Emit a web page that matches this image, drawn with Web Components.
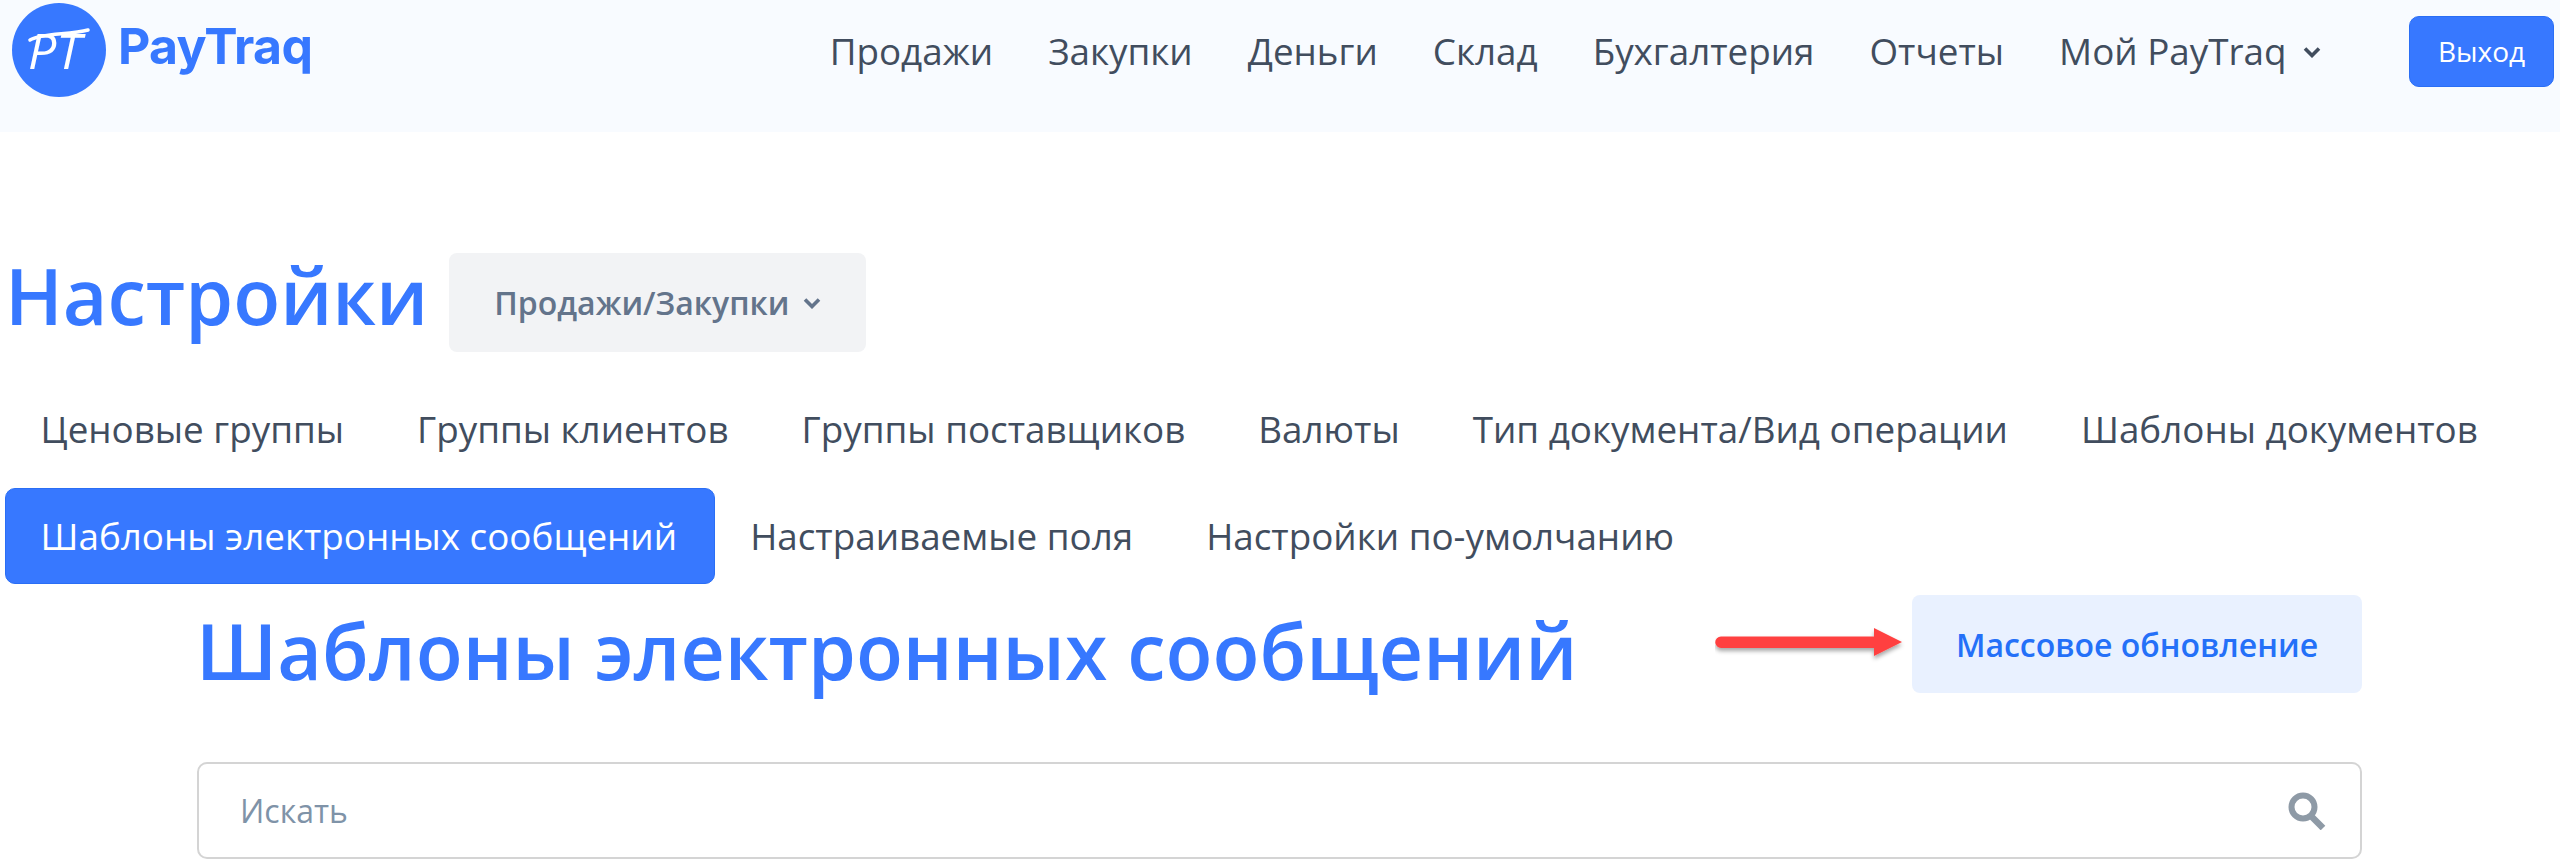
<!DOCTYPE html>
<html lang="ru"><head><meta charset="utf-8"><title>PayTraq</title>
<style>
html,body{margin:0;background:#fff}
body{font-family:"Open Sans","Noto Sans",sans-serif;height:864px;overflow:hidden}
</style></head><body>
<pt-app></pt-app>
<script>
function def(name, html){
  customElements.define(name, class extends HTMLElement{
    constructor(){super();this.attachShadow({mode:'open'}).innerHTML=html;}
  });
}
def('pt-logo',`<style>
:host{display:flex;align-items:flex-start;padding:3px 0 0 12px}
svg{width:94px;height:94px;display:block;flex:none}
.w{font:700 50px/1 Inter,sans-serif;color:#3778ff;letter-spacing:-.7px;margin:18px 0 0 12px}
</style>
<svg viewBox="0 0 94 94"><circle cx="47" cy="47" r="47" fill="#3778ff"/>
<text x="16" y="66" font-family="Open Sans" font-style="italic" font-weight="400" font-size="50" fill="#fff">PT</text>
<path d="M18 37C30 30 58 32 76 27" fill="none" stroke="#fff" stroke-width="3.500" stroke-linecap="round"/></svg>
<span class="w">PayTraq</span>`);
def('pt-nav-link',`<style>
:host{display:inline-flex;align-items:center;font-size:36.800px;color:#414d5e;white-space:nowrap;line-height:49px}
</style><slot></slot>`);
const chev=(w,c)=>`<svg width="${w}" viewBox="0 0 18 12" style="display:block"><path d="M2 2.500L9 9.500L16 2.500" fill="none" stroke="${c}" stroke-width="3.600"/></svg>`;
def('pt-header',`<style>
:host{display:flex;height:132px;background:#f8fbff;justify-content:space-between;box-sizing:border-box}
nav{display:flex;align-items:flex-start;gap:55px;padding-top:27px}
.r{display:flex}
.m{display:flex;align-items:center;gap:16px}
button{font:28px/68px "Open Sans",sans-serif;color:#fff;background:#3778ff;border:1px solid #2a6ef5;border-radius:10px;width:145px;height:71px;margin:16px 6px 0 88.500px;padding:0 0 3px}
</style>
<pt-logo></pt-logo>
<div class="r"><nav>
<pt-nav-link>Продажи</pt-nav-link><pt-nav-link>Закупки</pt-nav-link><pt-nav-link>Деньги</pt-nav-link><pt-nav-link>Склад</pt-nav-link><pt-nav-link>Бухгалтерия</pt-nav-link><pt-nav-link>Отчеты</pt-nav-link>
<pt-nav-link><span class="m">Мой PayTraq ${chev(18,'#414d5e')}</span></pt-nav-link>
</nav><button>Выход</button></div>`);
def('pt-title-row',`<style>
:host{display:flex;align-items:flex-start;gap:21px;padding:121px 0 0 5px;height:99px}
h1{margin:-7px 0 0;font:600 77px/99px "Open Sans",sans-serif;color:#3778ff}
.d{width:417px;height:99px;box-sizing:border-box;background:#f2f3f5;border-radius:8px;display:flex;align-items:center;justify-content:center;gap:14px;font-size:32px;font-weight:600;color:#63748b}
</style>
<h1>Настройки</h1><div class="d"><span>Продажи/Закупки</span>${chev(18,'#63748b')}</div>`);
def('pt-tab',`<style>
:host{display:block;box-sizing:border-box;height:96px;padding:0 36.500px 0 34.500px;border:1px solid transparent;border-radius:10px;font-size:36.800px;line-height:94px;color:#414d5e;white-space:nowrap}
:host([active]){background:#3778ff;border-color:#2a6ef5;color:#fff}
</style><slot></slot>`);
def('pt-tabs',`<style>
:host{display:flex;flex-wrap:wrap;gap:11px 0;padding:29px 20px 0 5px}
</style><slot></slot>`);
def('pt-section-head',`<style>
:host{display:flex;position:relative;justify-content:space-between;align-items:center;margin:11px 198px 0 197px;height:98px}
h2{margin:0;font:600 77px/98px "Open Sans",sans-serif;color:#3778ff;position:relative;top:7px;left:-1px}
.b{width:450px;height:98px;background:#e9f1ff;border-radius:8px;color:#2470f8;font-size:32px;font-weight:600;display:flex;align-items:center;justify-content:center}
svg{position:absolute;left:1518px;top:33px}
</style>
<h2>Шаблоны электронных сообщений</h2>
<svg width="190" height="36" viewBox="0 0 190 36"><defs><filter id="s" x="-10%" y="-30%" width="120%" height="170%"><feDropShadow dx="0" dy="3" stdDeviation="2" flood-color="#000" flood-opacity=".35"/></filter></defs>
<path filter="url(#s)" d="M6 8.500H159V0L187 14L159 28V20H6A5.700 5.700 0 0 1 6 8.500Z" fill="#ff4040"/></svg>
<div class="b">Массовое обновление</div>`);
def('pt-search',`<style>
:host{display:flex;align-items:center;justify-content:space-between;box-sizing:border-box;height:97px;margin:69px 198px 0 197px;border:2px solid #d4d4d4;border-radius:10px;padding:0 34px 0 41px;font-size:32px;color:#7f93a8}
svg{display:block}
</style><span>Искать</span>
<svg width="38" height="38" viewBox="0 0 38 38"><circle cx="15" cy="15" r="11.500" fill="none" stroke="#8e9aa6" stroke-width="6"/><path d="M23 24L35 36" stroke="#8e9aa6" stroke-width="6.500"/></svg>`);
def('pt-app',`<style>:host{display:block}</style>
<pt-header></pt-header><pt-title-row></pt-title-row>
<pt-tabs><pt-tab>Ценовые группы</pt-tab><pt-tab>Группы клиентов</pt-tab><pt-tab>Группы поставщиков</pt-tab><pt-tab>Валюты</pt-tab><pt-tab>Тип документа/Вид операции</pt-tab><pt-tab>Шаблоны документов</pt-tab><pt-tab active>Шаблоны электронных сообщений</pt-tab><pt-tab>Настраиваемые поля</pt-tab><pt-tab>Настройки по-умолчанию</pt-tab></pt-tabs>
<pt-section-head></pt-section-head><pt-search></pt-search>`);
</script></body></html>
